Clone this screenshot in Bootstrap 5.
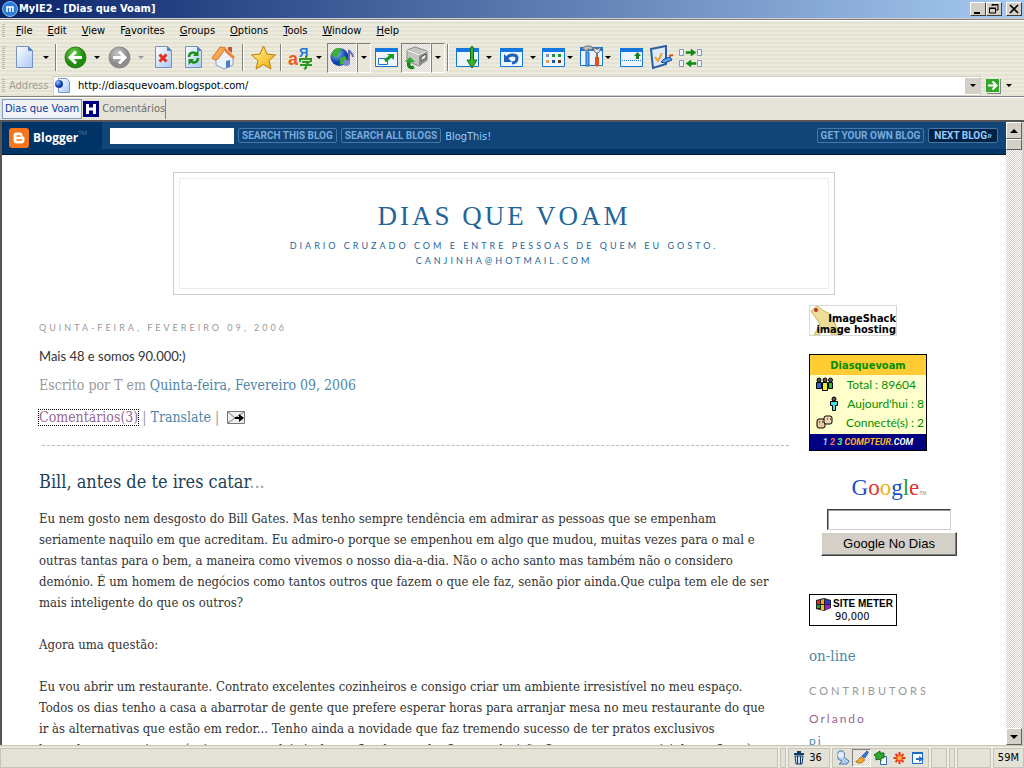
<!DOCTYPE html>
<html lang="pt">
<head>
<meta charset="utf-8">
<meta name="viewport" content="width=device-width, initial-scale=1">
<title>MyIE2 - [Dias que Voam]</title>
<link href="https://cdn.jsdelivr.net/npm/bootstrap@5.3.0/dist/css/bootstrap.min.css" rel="stylesheet">
<script src="https://cdn.jsdelivr.net/npm/bootstrap@5.3.0/dist/js/bootstrap.bundle.min.js"></script>
<style>
:root { --ui: "DejaVu Sans Condensed", "DejaVu Sans", sans-serif; --slab: "DejaVu Serif Condensed", "DejaVu Serif", serif; --human: "Lato", sans-serif; --face: #d4d0c8; }
body { font: 11px/14px var(--ui); color: #000; background: #e6e3d9; }
button { border: 0; padding: 0; background: transparent; color: inherit; font: inherit; }
a { text-decoration: none; }
.titlebar { height: 19px; padding-right: 2px; background: linear-gradient(90deg, #0a246a, #a6caf0); color: #fff; font: bold 11px/18px "DejaVu Sans Condensed", sans-serif; border-bottom: 1px solid #d4d0c8; }
.winbtn { width: 16px; height: 14px; background: var(--face); border: 1px solid; border-color: #fff #404040 #404040 #fff; color: #000; }
.chrome { background: repeating-linear-gradient(#ecebdd 0 2px, #e4e3d3 2px 4px); border-top: 1px solid #808080; border-bottom: 1px solid #808080; box-shadow: inset 0 1px #fff; }
.grip { width: 3px; background: repeating-linear-gradient(#bbb9ae 0 1px, transparent 1px 2px); margin: 4px 4px 4px 2px; }
.menubar { height: 22px; }
.menubar button { padding: 0 8px 0 7px; }
.tools { height: 33px; padding-bottom: 2px; }
.ico { width: 30px; height: 30px; }
.ico-s { width: 26px; height: 30px; }
.drop { width: 14px; height: 30px; }
.drop::before, .caret::before { content: ""; display: block; width: 5px; border: solid transparent; border-width: 3px 3px 0; border-top-color: #000; margin: 0 auto; }
.drop-s { width: 12px; }
.drop-s::before { margin-left: 1px; }
.drop.off::before { border-top-color: #999; }
.pressed { border: 1px solid; border-color: #808080 #fff #fff #808080; background: repeating-conic-gradient(#d9d7cf 0 25%, #f4f3ee 0 50%) 0 0 / 2px 2px; }
.drop.pressed { background: #e9e7da; }
.vsep { width: 2px; height: 27px; margin: 0 3px 0 2px; border-left: 1px solid #808080; border-right: 1px solid #fff; }
.addr { height: 21px; }
.addr label { color: #a09e92; width: 44px; }
.addrbox { height: 20px; background: #fff; border: 1px solid #d4d0c8; }
.addrbox input { border: 0; outline: 0; padding: 0 0 0 6px; font: inherit; min-width: 0; }
.caret { width: 15px; height: 16px; background: var(--face); }
.tabs { height: 23px; border-top: 1px solid #fff; padding-left: 2px; }
.tab-on { height: 20px; border: 1px solid #7a9ccb; background: #f0f2f6; color: #0a3c9c; padding: 0 2px; }
.tab-off { height: 20px; border-right: 1px solid #808080; color: #6e6e6e; }
.view { border-top: 2px solid #555; border-left: 2px solid #555; background: #fff; min-height: 0; }
.doc { overflow: hidden; min-width: 0; }
.bnav { height: 32px; background: #114477; border-bottom: 5px solid #003366; box-shadow: 0 1px #001a33; }
.blogger { width: 100px; padding-left: 7px; background: #003366; height: 32px; color: #fff; font: bold 12px/18px "Open Sans", sans-serif; }
.blogger sup { color: #4a77a8; font-size: 6px; font-weight: 400; top: -5px; }
.bnav input { width: 124px; height: 16px; border: 0; background: #fff; }
.bbtn { height: 15px; padding: 0 3px; border: 1px solid #4477aa; border-radius: 2px; color: #78aadd; font: bold 10px/13px "Roboto", sans-serif; }
.bbtn-dark { background: #002244; color: #99ccff; padding: 0 5px; }
.blogthis { color: #99ccff; padding-top: 3px; }
.masthead { width: 100%; max-width: 662px; margin: 18px auto 0; border: 1px solid #ccc; padding: 5px; }
.masthead > div { border: 1px solid #eee; height: 111px; padding-top: 20px; color: #1f6699; }
.masthead h1 { font: 27px/34px "Liberation Serif", serif; letter-spacing: 3px; margin: 0 0 5px; }
.masthead p { font: 9px/15px var(--human); letter-spacing: 3px; margin: 0; }
.blog { padding: 10px 0 0 37px; gap: 20px; }
.post { font: 13px/21px var(--slab); color: #333; white-space: nowrap; min-width: 0; }
.post h2 { font: 9px/14px var(--human); letter-spacing: 3px; color: #999; margin: 16px 0 11px; }
.post h3 { font: 18px/24px var(--slab); color: #1b4257; margin: 24px 0 14px; }
.post h3 span { color: #8a9ca8; }
.says { font: 13px/21px var(--human); }
.meta { color: #999; font-size: 14px; }
.meta-links { margin: 11px 0 17px; }
.meta a, .on-line { color: #4e87a8; }
.meta a.seen, .seen { color: #956796; }
.meta a.seen { outline: 1px dotted #000; line-height: 15px; }
.dash { border-top: 1px dashed #bbb; margin-left: 3px; }
.side { width: 197px; }
.shack { width: 88px; height: 31px; border: 1px solid #d8d8d8; position: relative; overflow: hidden; font: bold 11px/11px "DejaVu Sans Condensed", sans-serif; color: #000; text-align: right; padding-top: 7px; white-space: nowrap; }
.shack svg { position: absolute; left: 0; top: 0; }
.shack span { position: relative; }
.counter { width: 118px; height: 97px; border: 1px solid #000; background: #ffffcc; color: #009000; margin-top: 18px; font: 12px/19px var(--human); }
.counter b { background: #ffcc33; height: 20px; text-align: center; font: bold 11px/22px "DejaVu Sans Condensed", sans-serif; }
.crow { height: 19px; padding: 0 2px 0 6px; white-space: nowrap; }
.cfoot { background: #000080; height: 16px; color: #ffb52e; font: italic bold 9px/16px "Roboto", sans-serif; }
.gwrap { width: 136px; margin: 22px 0 0 12px; }
.glogo { font: 23px/30px "Liberation Serif", serif; }
.glogo small { font: 5px/10px "Liberation Sans", sans-serif; color: #888; }
.gwrap input { width: 124px; height: 21px; border: 1px solid; border-color: #404040 #d4d0c8 #d4d0c8 #404040; box-shadow: inset 1px 1px #999; margin-top: 6px; }
.gbtn { width: 136px; height: 24px; background: var(--face); border: 1px solid; border-color: #fff #404040 #404040 #fff; box-shadow: inset -1px -1px #808080; font: 13px/20px "Liberation Sans", sans-serif; margin-top: 2px; }
.meter { width: 88px; height: 32px; border: 1px solid #000; margin-top: 38px; padding: 2px 2px 0 3px; font: bold 10px/13px "Liberation Sans", sans-serif; color: #000; white-space: nowrap; }
.meter span { display: block; font: 11px/13px var(--ui); padding-left: 22px; }
.on-line { font: 15px/20px var(--slab); }
.side h2 { font: 11px/16px var(--human); color: #999; letter-spacing: 3px; margin: 17px 0 11px; }
.who { font: 12px/18px var(--human); letter-spacing: 2px; margin-bottom: 4px; }
.scroll { width: 18px; background: repeating-conic-gradient(#d4d0c8 0 25%, #fff 0 50%) 0 0 / 2px 2px; border-right: 2px solid #d4d0c8; }
.sbtn { width: 16px; height: 17px; background: var(--face); border: 1px solid; border-color: #fff #606060 #606060 #fff; }
.thumb { height: 11px; }
.status { height: 23px; border-top: 1px solid #c8c6b4; padding-top: 2px; background: #e4e1d6; }
.cell { height: 20px; border: 1px solid #c6c3b8; margin-right: 2px; box-shadow: 0 0 0 1px #efede5; }
.cell-xs { width: 6px; }
.cell-s { width: 16px; }
.sico { width: 19px; height: 18px; }
</style>
</head>
<body class="d-flex flex-column vh-100 overflow-hidden">
<svg width="0" height="0" class="position-absolute" aria-hidden="true">
  <defs>
    <linearGradient id="paper" x2="1" y2="1"><stop stop-color="#fff"/><stop offset="1" stop-color="#a8c8f4"/></linearGradient>
    <radialGradient id="green" cx=".4" cy=".3"><stop stop-color="#6fd048"/><stop offset="1" stop-color="#1d8a0e"/></radialGradient>
    <radialGradient id="gray" cx=".4" cy=".3"><stop stop-color="#c4c4c4"/><stop offset="1" stop-color="#8c8c8c"/></radialGradient>
    <radialGradient id="globe" cx=".35" cy=".3"><stop stop-color="#8fc4ff"/><stop offset="1" stop-color="#123fae"/></radialGradient>
    <linearGradient id="gold" x2="1" y2="1"><stop stop-color="#fff59a"/><stop offset="1" stop-color="#f5a800"/></linearGradient>
    <g id="sheet"><path d="M1.500.5h12l4 4v17h-16z" fill="url(#paper)" stroke="#7792c8"/><path d="M13.500.5v4h4" fill="#5d83c4" stroke="#5d83c4"/></g>
    <g id="win"><path d="M.5 2.500h22v18h-22z" fill="#eef5ff" stroke="#1577d2"/><path d="M0 2h23v4H0z" fill="#1577e0"/></g>
  </defs>
</svg>

<header class="titlebar d-flex align-items-center">
  <svg width="19" height="18" viewBox="0 0 19 18"><circle cx="10" cy="9" r="7.500" fill="#2e7cd6" stroke="#8ebcf0"/><path d="M7 12V7h6v5M10 7v5" fill="none" stroke="#fff" stroke-width="1.500"/></svg>
  <span class="flex-grow-1">MyIE2 - [Dias que Voam]</span>
  <button class="winbtn d-flex" aria-label="Minimize"><svg width="14" height="12"><path d="M3 9h6v2H3z"/></svg></button>
  <button class="winbtn d-flex" aria-label="Restore"><svg width="14" height="12" fill="none" stroke="#000"><path d="M5 3V1.500h6V7H9M5 2h6M2.500 5.500h6V10h-6zM2 5h7" /></svg></button>
  <button class="winbtn d-flex ms-1" aria-label="Close"><svg width="14" height="12"><path d="M3 2l8 8M11 2l-8 8" stroke="#000" stroke-width="1.700"/></svg></button>
</header>

<section class="chrome flex-shrink-0">
  <nav class="menubar d-flex">
    <i class="grip me-0"></i>
    <span class="d-flex ms-1"><button><u>F</u>ile</button><button><u>E</u>dit</button><button><u>V</u>iew</button><button>F<u>a</u>vorites</button><button><u>G</u>roups</button><button><u>O</u>ptions</button><button><u>T</u>ools</button><button><u>W</u>indow</button><button><u>H</u>elp</button></span>
  </nav>
  <div class="tools d-flex align-items-center">
    <i class="grip align-self-stretch"></i>
    <button class="ico" aria-label="New"><svg width="19" height="23"><use href="#sheet"/></svg></button>
    <button class="drop" aria-label="New menu"></button>
    <i class="vsep"></i>
    <button class="ico" aria-label="Back"><svg width="23" height="23"><circle cx="11.500" cy="11.500" r="10.500" fill="url(#green)" stroke="#2a7a1c"/><path d="M12 5.500l-6 6 6 6M6.500 11.500H18" fill="none" stroke="#fff" stroke-width="3"/></svg></button>
    <button class="drop" aria-label="Back menu"></button>
    <button class="ico" aria-label="Forward"><svg width="23" height="23"><circle cx="11.500" cy="11.500" r="10.500" fill="url(#gray)" stroke="#888"/><path d="M11 5.500l6 6-6 6M16.500 11.500H5" fill="none" stroke="#fff" stroke-width="3"/></svg></button>
    <button class="drop off" aria-label="Forward menu"></button>
    <button class="ico" aria-label="Stop"><svg width="19" height="23"><use href="#sheet"/><path d="M5.500 8.500l7 7M12.500 8.500l-7 7" stroke="#e8301c" stroke-width="3"/></svg></button>
    <button class="ico" aria-label="Refresh"><svg width="19" height="23"><use href="#sheet"/><path d="M5 11c0-4 4-6 7-3M14 12c0 4-4 6-7 3" fill="none" stroke="#1b8f1b" stroke-width="2.500"/><path d="M14.500 4v6H9zM4.500 19v-6H10z" fill="#1b8f1b"/></svg></button>
    <button class="ico" aria-label="Home"><svg width="25" height="25"><path d="M17 2h4v6l-4-3z" fill="#c9503a"/><path d="M5 12v8l8 4 9-4v-8l-8-8z" fill="#edf2fc" stroke="#8a9cc8"/><path d="M1 13L9 2l6 1-8 11-3 1z" fill="#f8a850" stroke="#d07a30"/><path d="M14 3l10 9-2 2-8-7z" fill="#f08038"/><path d="M15 23v-7l4-1v7z" fill="#4a7cc4"/></svg></button>
    <i class="vsep ms-1 me-1"></i>
    <button class="ico" aria-label="Favorites"><svg width="25" height="25"><path d="M12.500 1l3.500 8 8.500 1-6.500 5.500 2 8.500-7.500-4.500L5 24l2-8.500L.5 10 9 9z" fill="url(#gold)" stroke="#b57d0a"/></svg></button>
    <i class="vsep"></i>
    <button class="ico" aria-label="Translate"><svg width="25" height="25" font-weight="bold" font-family="Liberation Sans, sans-serif"><text x="0" y="20" font-size="18" fill="#ee5a24">a</text><text x="11" y="12" font-size="13" fill="#1c7ad8">Я</text><path d="M12 17v-3h11v3M18 11v3M14 17h7l-3 3v3l-2 1M12 20h12" fill="none" stroke="#2c9a22" stroke-width="2"/></svg></button>
    <button class="drop drop-s" aria-label="Translate menu"></button>
    <button class="ico pressed" aria-label="Media"><svg width="25" height="25"><circle cx="9.500" cy="12" r="9" fill="url(#globe)"/><path d="M3 6c3-4 7-3 8-2l-2 5-3 4-4-3zM10 13l5-2 2 3-4 5-3 1z" fill="#3cb030"/><path d="M19 18V5c1 3 4 3 4 7" fill="none" stroke="#6268b8" stroke-width="2"/><ellipse cx="16.500" cy="18" rx="3.500" ry="3" fill="#7f85d2"/></svg></button>
    <button class="drop pressed" aria-label="Media menu"></button>
    <button class="ico" aria-label="Full screen"><svg width="23" height="23"><use href="#win"/><path d="M3.500 12.500h9v6h-9z" fill="#fff" stroke="#1577d2"/><path d="M10 15l6-5" stroke="#169a25" stroke-width="3"/><path d="M12 8h7v6z" fill="#169a25"/></svg></button>
    <button class="ico pressed" aria-label="Offline"><svg width="25" height="24"><path d="M3 4l8-3 12 4v9l-8 6-12-5z" fill="#c4c4c0" stroke="#888"/><path d="M15 9l8-4v9l-8 6z" fill="#8c8c8a"/><path d="M3 4l12 5 8-4" fill="none" stroke="#f4f4f4"/><path d="M17 11l5-3v4l-5 3z" fill="#eee" stroke="#555"/><path d="M10 21c-5 2-6-2-5-5" fill="none" stroke="#16851e" stroke-width="3.500"/><path d="M1 16l5-5 5 5z" fill="#2aa92d"/></svg></button>
    <button class="drop pressed" aria-label="Offline menu"></button>
    <i class="vsep"></i>
    <button class="ico" aria-label="Scroll"><svg width="23" height="25"><use href="#win" y="1"/><path d="M16 1l1.500 2v12h3.500l-5 8-5-8h3.500V3z" fill="#36b32f" stroke="#156b12"/></svg></button>
    <button class="drop" aria-label="Scroll menu"></button>
    <button class="ico" aria-label="Undo"><svg width="23" height="23"><use href="#win"/><path d="M7 12c2-4 10-4 10 0 0 3-2 5-5 5" fill="none" stroke="#1c62b8" stroke-width="3"/><path d="M4 8v8h8z" fill="#1c62b8"/></svg></button>
    <button class="drop" aria-label="Undo menu"></button>
    <button class="ico-s" aria-label="Groups"><svg width="23" height="23"><use href="#win"/><path d="M4 8h3v3H4z" fill="#8a8cc4"/><path d="M10 8h3v3h-3zM16 8h3v3h-3z" fill="#199a2c"/><path d="M4 14h3v3H4z" fill="#f0a040"/><path d="M10 14h3v3h-3z" fill="#1c50c0"/><path d="M16 14h3v3h-3z" fill="#604018"/></svg></button>
    <button class="drop drop-s" aria-label="Groups menu"></button>
    <button class="ico-s" aria-label="Tools"><svg width="23" height="25"><use href="#win"/><path d="M2 3l4-2h5l2 3-3 1-2-1-1 2H5V5z" fill="#bbb" stroke="#777"/><path d="M6 7h3v14H6z" fill="#68a8ec" stroke="#1768b4"/><path d="M14 2v4l2 2h2l2-2V2l-2 2h-2z" fill="#ddd" stroke="#777"/><path d="M16 8h2v5h-2z" fill="#777"/><path d="M15 12h4v8l-2 2-2-2z" fill="#e65018"/></svg></button>
    <button class="drop drop-s" aria-label="Tools menu"></button>
    <button class="ico" aria-label="Upload"><svg width="23" height="23"><use href="#win"/><path d="M2 14.500h19" stroke="#1577d2" stroke-dasharray="1 1"/><path d="M14 10l3.500-4 3.500 4zM16 10h3v3h-3z" fill="#16821d"/></svg></button>
    <button class="ico" aria-label="Form fill"><svg width="25" height="25"><path d="M2 4l15-3v18L4 23z" fill="#dceaff" stroke="#2c5c9c" stroke-width="2"/><path d="M6 12l3 4 4-8" fill="none" stroke="#f0a020" stroke-width="2"/><path d="M12 17l3-3 6-2 2 3-7 3z" fill="#5aa0ec" stroke="#12478c"/><path d="M20 11l4-1" stroke="#c85a20" stroke-width="2"/></svg></button>
    <button class="ico" aria-label="Sync"><svg width="24" height="22" fill="#edf3ff" stroke="#8296c8"><path d="M.5 2.500h4v6h-4zM18.500 2.500h4v6h-4zM.5 13.500h4v6h-4zM18.500 13.500h4v6h-4z"/><path d="M7 4.500h5V2l5 3.500L12 9V6.500H7zM17 15.500h-5V13l-5 3.500 5 3.500v-2.500h5z" fill="#0c8c14" stroke="#0c8c14" stroke-width=".5"/></svg></button>
  </div>
  <div class="addr d-flex align-items-center">
    <i class="grip align-self-stretch my-1 me-1"></i>
    <label for="url">Address</label>
    <div class="addrbox d-flex flex-grow-1 align-items-center">
      <svg width="18" height="17" viewBox="0 0 18 17"><path d="M4.500 1.500h8l3 3v11h-11z" fill="url(#paper)" stroke="#7894cc"/><circle cx="5" cy="7" r="4" fill="url(#globe)"/></svg>
      <input id="url" class="flex-grow-1" value="http://diasquevoam.blogspot.com/">
      <button class="caret" aria-label="History"></button>
    </div>
    <button class="ms-1" aria-label="Go"><svg width="17" height="17" class="d-block"><path d="M2 2h14v15H2z" fill="#888"/><path d="M.5 1.500h14v14H.5z" fill="#37a52c" stroke="#ddf0d8"/><path d="M3 8.500h8M7.500 4.500l4 4-4 4" fill="none" stroke="#fff" stroke-width="2"/></svg></button>
    <button class="drop me-2" aria-label="Go menu"></button>
  </div>
</section>

<nav class="tabs d-flex align-items-center flex-shrink-0">
  <button class="tab-on">Dias que Voam</button>
  <button class="tab-off d-flex align-items-center"><svg width="20" height="17"><path d="M1 0h16v16H1z" fill="#000080"/><path d="M5.500 3v10M12.500 3v10M6 8h7" stroke="#fff" stroke-width="3"/></svg><span>Comentários</span></button>
</nav>

<main class="view d-flex flex-grow-1">
  <div class="doc flex-grow-1">
    <div class="bnav d-flex">
      <div class="blogger d-flex align-items-center flex-shrink-0"><svg width="20" height="20" class="me-1"><rect width="20" height="20" rx="3" fill="#f6751b"/><path d="M7.500 4.500h3a3 3 0 013 3c0 2 2 .5 2 2.500v2a3.500 3.500 0 01-3.500 3.500H8A3.500 3.500 0 014.500 12V7.500a3 3 0 013-3z" fill="#fff"/><path d="M8 8h3M8 12h4.500" stroke="#f6751b" stroke-width="1.500" stroke-linecap="round"/></svg>Blogger<sup>TM</sup></div>
      <div class="d-flex align-items-center flex-grow-1 gap-1 ps-2 pe-2">
        <input type="text" aria-label="Search blogs">
        <button class="bbtn">SEARCH THIS BLOG</button>
        <button class="bbtn">SEARCH ALL BLOGS</button>
        <a href="#" class="blogthis">BlogThis!</a>
        <button class="bbtn ms-auto">GET YOUR OWN BLOG</button>
        <button class="bbtn bbtn-dark">NEXT BLOG»</button>
      </div>
    </div>
    <header class="masthead text-center"><div>
      <h1>DIAS QUE VOAM</h1>
      <p>DIARIO CRUZADO COM E ENTRE PESSOAS DE QUEM EU GOSTO.<br>CANJINHA@HOTMAIL.COM</p>
    </div></header>
    <div class="blog d-flex">
      <article class="post flex-grow-1">
        <h2>QUINTA-FEIRA, FEVEREIRO 09, 2006</h2>
        <p class="says mb-2">Mais 48 e somos 90.000:)</p>
        <p class="meta mb-0">Escrito por T em <a href="#">Quinta-feira, Fevereiro 09, 2006</a></p>
        <p class="meta meta-links d-flex align-items-center"><a href="#" class="seen">Comentários(3)</a><span class="mx-1">|</span><a href="#">Translate</a><span class="ms-1 me-2">|</span><svg width="19" height="14"><path d="M.5.5h17v12H.5z" fill="#eee" stroke="#777"/><path d="M1 1l7 6-7 5M17 1L8 7" fill="none" stroke="#777"/><path d="M8 6h4V3l5 4-5 4V8H8z"/></svg></p>
        <div class="dash"></div>
        <h3>Bill, antes de te ires catar<span>...</span></h3>
        <p class="mb-0">Eu nem gosto nem desgosto do Bill Gates. Mas tenho sempre tendência em admirar as pessoas que se empenham<br>seriamente naquilo em que acreditam. Eu admiro-o porque se empenhou em algo que mudou, muitas vezes para o mal e<br>outras tantas para o bem, a maneira como vivemos o nosso dia-a-dia. Não o acho santo mas também não o considero<br>demónio. É um homem de negócios como tantos outros que fazem o que ele faz, senão pior ainda.Que culpa tem ele de ser<br>mais inteligente do que os outros?<br><br>Agora uma questão:<br><br>Eu vou abrir um restaurante. Contrato excelentes cozinheiros e consigo criar um ambiente irresistível no meu espaço.<br>Todos os dias tenho a casa a abarrotar de gente que prefere esperar horas para arranjar mesa no meu restaurante do que<br>ir às alternativas que estão em redor... Tenho ainda a novidade que faz tremendo sucesso de ter pratos exclusivos<br>baseados em receitas próprias que mandei vir de um fim do mundo. Quem a decisão Ou que vou ter os vizinhos a ficar à</p>
      </article>
      <aside class="side flex-shrink-0">
        <div class="shack"><svg width="40" height="30"><path d="M1 5l6-5 7 5 6 3 6 12 6 9H22l-6-8-7 8H4l6-11z" fill="#eedd98" stroke="#d0b450"/><circle cx="6" cy="4" r="2" fill="#b33"/></svg><span>ImageShack<br>image hosting</span></div>
        <div class="counter d-flex flex-column"><b>Diasquevoam</b>
          <div class="crow d-flex align-items-center justify-content-between"><svg width="18" height="15" stroke="#000"><path d="M.5 5.500h5v6h-5z" fill="#36c"/><path d="M6.500 5.500h5v8h-5z" fill="#ee2"/><path d="M12.500 5.500h4v6h-4z" fill="#2b3"/><circle cx="3" cy="3" r="2" fill="#555"/><circle cx="9" cy="3" r="2" fill="#555"/><circle cx="14.500" cy="3" r="2" fill="#555"/></svg><span class="me-2">Total : 89604</span></div>
          <div class="crow d-flex align-items-center justify-content-end"><svg width="9" height="15" stroke="#000"><path d="M.5 5.500h7v4h-2v5h-3v-5h-2z" fill="#4de0e8"/><circle cx="4" cy="3" r="2" fill="#555"/></svg><span class="ms-2">Aujourd'hui : 8</span></div>
          <div class="crow d-flex align-items-center justify-content-between"><svg width="17" height="15" stroke="#000"><rect x="1" y="4" width="8" height="9" rx="2" fill="#e8c8a0"/><rect x="8" y="1" width="8" height="8" rx="2" fill="#f0d8b8"/><path d="M3 7h1M6 7h1M11 4h1M14 4h1"/></svg><span>Connecté(s) : 2</span></div>
          <div class="cfoot text-center mt-auto"><span style="color:#8bd3ff">1</span> <span style="color:#f66">2</span> <span style="color:#7e7">3</span> COMPTEUR.<span class="text-white">COM</span></div>
        </div>
        <form class="gwrap d-flex flex-column align-items-center">
          <div class="glogo"><span style="color:#1a4fc4">G</span><span style="color:#d33">o</span><span style="color:#e8b410">o</span><span style="color:#1a4fc4">g</span><span style="color:#1f9a3c">l</span><span style="color:#d33">e</span><small>TM</small></div>
          <input type="text" aria-label="Google search">
          <button type="button" class="gbtn">Google No Dias</button>
        </form>
        <div class="meter"><svg width="20" height="17" class="float-start"><path d="M3 3l8-2 7 2v8l-7 3-8-2z" fill="#222"/><path d="M4 4l3-1v4H4z" fill="#e22"/><path d="M8 3l3-1v5H8z" fill="#fa0"/><path d="M4 8h3v3H4z" fill="#2a2"/><path d="M8 8h3v5H8z" fill="#ec0"/><path d="M12 2l5 2v3h-5z" fill="#33d"/><path d="M12 8h5v3l-5 2z" fill="#92c"/></svg>SITE METER<span>90,000</span></div>
        <p class="mt-3 pt-1 mb-0"><a href="#" class="on-line">on-line</a></p>
        <h2>CONTRIBUTORS</h2>
        <p class="who"><a href="#" class="seen">Orlando</a></p>
        <p class="who"><a href="#" class="on-line who">pi</a></p>
      </aside>
    </div>
  </div>
  <div class="scroll d-flex flex-column flex-shrink-0">
    <button class="sbtn" aria-label="Scroll up"><svg width="14" height="14" class="d-block"><path d="M3 9l4-4 4 4z"/></svg></button>
    <div class="sbtn thumb"></div>
    <button class="sbtn mt-auto" aria-label="Scroll down"><svg width="14" height="14" class="d-block"><path d="M3 5h8L7 9z"/></svg></button>
  </div>
</main>

<footer class="status d-flex flex-shrink-0">
  <div class="cell flex-grow-1"></div><div class="cell cell-xs"></div>
  <div class="cell d-flex align-items-center px-1"><svg width="12" height="14" class="me-1"><path d="M1 3h10M4 1h4" stroke="#123a66" stroke-width="2"/><path d="M2 5h8l-1 8H3z" fill="#cfe0f4" stroke="#123a66"/><path d="M4.500 5v8M7.500 5v8" stroke="#123a66"/></svg>36&nbsp;</div>
  <div class="cell d-flex align-items-center">
    <svg class="sico" viewBox="0 0 19 18"><path d="M5 3c4-3 8 0 6 5l5 4-2 3H6l3-3-4-2z" fill="#b0cdf0" stroke="#5078ac"/><circle cx="8" cy="6" r="3" fill="#e5f0ff"/></svg>
    <svg class="sico pressed" viewBox="0 0 19 18"><path d="M10 7l6-6 1 2-4 6z" fill="#3c78d8" stroke="#1e4c94"/><path d="M3 13c3 0 3-4 6-5l4 3c-2 4-7 5-10 2z" fill="#f5a52a" stroke="#ad6a10"/></svg>
    <svg class="sico" viewBox="0 0 19 18"><path d="M9.500 7.500h6v8h-6z" fill="#fff" stroke="#3a68b0"/><path d="M3 6l6-4v2h4v5h-3v3l-2-2-3 1V8z" fill="#30a82d" stroke="#126c18"/></svg>
    <svg class="sico" viewBox="0 0 19 18"><path d="M9.500 3v12M3.500 9h12M5.500 5l8 8M13.500 5l-8 8" stroke="#e8351b" stroke-width="2"/><circle cx="9.500" cy="9" r="3" fill="#ffb030" stroke="#e8351b"/></svg>
    <svg class="sico" viewBox="0 0 19 18"><path d="M3.500 3.500h10v11h-10z" fill="#fff" stroke="#1d6cc8"/><path d="M3 4h11" stroke="#1d6cc8" stroke-width="2"/><path d="M7 9h3V7l5 3-5 3v-2H7z" fill="#2c70c8"/></svg>
  </div>
  <div class="cell cell-s"></div><div class="cell cell-xs"></div><div class="cell px-3"></div>
  <div class="cell d-flex align-items-center px-1 me-0">59M</div>
</footer>
</body>
</html>
